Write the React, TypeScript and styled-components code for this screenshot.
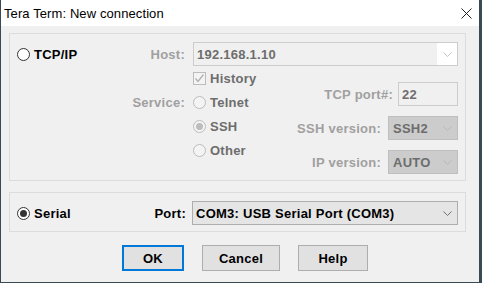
import styled, { createGlobalStyle } from 'styled-components'

const GlobalStyle = createGlobalStyle`
  html, body {
    margin: 0;
    padding: 0;
    background: #ffffff;
  }
  * {
    box-sizing: border-box;
  }
`

const Window = styled.div`
  width: 482px;
  height: 283px;
  display: flex;
  flex-direction: column;
  background: #f0f0f0;
  border-left: 1px solid #3b4a52;
  border-right: 3px solid #3b4a52;
  border-bottom: 1px solid #3b4a52;
  font-family: 'Liberation Sans', Arial, sans-serif;
  font-size: 13px;
  font-weight: bold;
  letter-spacing: 0.25px;
  color: #000;
`

const TitleBar = styled.div`
  height: 26px;
  flex: none;
  display: flex;
  align-items: center;
  justify-content: space-between;
  padding: 0 7px 0 3px;
  background: #ffffff;
`

const TitleText = styled.span`
  font-weight: normal;
  letter-spacing: 0.1px;
  color: #000;
`

const Body = styled.div`
  flex: 1;
  display: flex;
  flex-direction: column;
  padding: 7px 13px 0 8px;
`

const Group = styled.div`
  border: 1px solid #dcdcdc;
  display: grid;
  column-gap: 8px;
`

const TcpGroup = styled(Group)`
  padding: 8px 7px 18px 7px;
  grid-template-columns: 1fr auto 90px 167px;
  grid-template-rows: repeat(5, 24px);
  align-items: center;
`

const SerialGroup = styled(Group)`
  margin-top: 11px;
  padding: 8px 7px 6px 7px;
  grid-template-columns: 1fr auto 266px;
  column-gap: 6px;
  align-items: center;
`

const Option = styled.label`
  display: flex;
  align-items: center;
  gap: 4px;
  white-space: nowrap;
`

const Text = styled.span<{ $tone?: 'dim' | 'muted' }>`
  color: ${p =>
    p.$tone === 'dim' ? '#a0a0a0' : p.$tone === 'muted' ? '#6d6d6d' : '#000'};
  white-space: nowrap;
`

const FieldLabel = styled(Text)`
  justify-self: end;
`

const Radio = styled.span<{ $disabled?: boolean; $checked?: boolean }>`
  width: 13px;
  height: 13px;
  flex: none;
  border-radius: 50%;
  border: 1px solid ${p => (p.$disabled ? '#bcbcbc' : '#333333')};
  background: ${p => (p.$disabled ? '#f4f4f4' : '#ffffff')};
  display: flex;
  align-items: center;
  justify-content: center;

  &::after {
    content: '';
    display: ${p => (p.$checked ? 'block' : 'none')};
    width: 7px;
    height: 7px;
    border-radius: 50%;
    background: ${p => (p.$disabled ? '#bcbcbc' : '#333333')};
  }
`

const CheckBox = styled.span`
  width: 13px;
  height: 13px;
  flex: none;
  border: 1px solid #bcbcbc;
  background: #f4f4f4;
  display: flex;
  align-items: center;
  justify-content: center;
`

const Combo = styled.div<{ $variant: 'edit' | 'grey' | 'normal' }>`
  height: 24px;
  display: flex;
  align-items: center;
  justify-content: space-between;
  padding-left: 3px;
  border: 1px solid
    ${p => (p.$variant === 'normal' ? '#adadad' : p.$variant === 'grey' ? '#bfbfbf' : '#cccccc')};
  background: ${p =>
    p.$variant === 'normal' ? '#e5e5e5' : p.$variant === 'grey' ? '#cccccc' : '#f0f0f0'};
  color: ${p => (p.$variant === 'normal' ? '#000' : '#6d6d6d')};
`

const ArrowBox = styled.span<{ $white?: boolean }>`
  width: 20px;
  align-self: stretch;
  display: flex;
  align-items: center;
  justify-content: center;
  background: ${p => (p.$white ? '#ffffff' : 'transparent')};
`

const HostCombo = styled(Combo)`
  grid-column: 3 / 5;
`

const LeftOptions = styled.div`
  grid-column: 3;
  grid-row: 2 / 6;
  display: grid;
  grid-template-rows: repeat(4, 24px);
  align-items: center;
`

const RightFields = styled.div`
  grid-column: 4;
  grid-row: 2 / 6;
  align-self: start;
  display: flex;
  flex-direction: column;
  gap: 10px;
  padding-top: 16px;
`

const FieldRow = styled.div<{ $gap: number }>`
  display: flex;
  align-items: center;
  justify-content: flex-end;
  gap: ${p => p.$gap}px;
`

const PortInput = styled.div`
  width: 60px;
  height: 24px;
  display: flex;
  align-items: center;
  padding-left: 3px;
  border: 1px solid #cccccc;
  background: #f0f0f0;
  color: #6d6d6d;
`

const SmallSelect = styled(Combo)`
  width: 70px;
  padding-left: 4px;
`

const TcpRadio = styled(Option)`
  grid-column: 1;
  grid-row: 1;
`

const ServiceLabel = styled(FieldLabel)`
  grid-column: 2;
  grid-row: 3;
`

const ButtonRow = styled.div`
  display: flex;
  justify-content: center;
  gap: 18px;
  margin-top: 13px;
  padding-left: 15px;
`

const Button = styled.button<{ $default?: boolean; $w: number }>`
  width: ${p => p.$w}px;
  height: 26px;
  font: inherit;
  letter-spacing: inherit;
  color: #000;
  background: #e1e1e1;
  border: ${p => (p.$default ? '2px solid #0078d7' : '1px solid #adadad')};
  padding: 0;
`

const Chevron = ({ color }: { color: string }) => (
  <svg width="9" height="5" viewBox="0 0 9 5">
    <polyline points="0.5,0.5 4.5,4.5 8.5,0.5" fill="none" stroke={color} strokeWidth="1" />
  </svg>
)

export default function App() {
  return (
    <>
      <GlobalStyle />
      <Window>
        <TitleBar>
          <TitleText>Tera Term: New connection</TitleText>
          <svg width="11" height="11" viewBox="0 0 11 11">
            <path d="M0.5 0.5 L10.5 10.5 M10.5 0.5 L0.5 10.5" stroke="#222" strokeWidth="1" />
          </svg>
        </TitleBar>
        <Body>
          <TcpGroup>
            <TcpRadio>
              <Radio />
              <Text>TCP/IP</Text>
            </TcpRadio>
            <FieldLabel $tone="dim">Host:</FieldLabel>
            <HostCombo $variant="edit">
              <span>192.168.1.10</span>
              <ArrowBox $white>
                <Chevron color="#c4c4c4" />
              </ArrowBox>
            </HostCombo>
            <ServiceLabel $tone="dim">Service:</ServiceLabel>
            <LeftOptions>
              <Option>
                <CheckBox>
                  <svg width="11" height="11" viewBox="0 0 11 11">
                    <polyline points="1.5,5.5 4,8.5 9.5,1.5" fill="none" stroke="#b0b0b0" strokeWidth="1.3" />
                  </svg>
                </CheckBox>
                <Text $tone="muted">History</Text>
              </Option>
              <Option>
                <Radio $disabled />
                <Text $tone="muted">Telnet</Text>
              </Option>
              <Option>
                <Radio $disabled $checked />
                <Text $tone="muted">SSH</Text>
              </Option>
              <Option>
                <Radio $disabled />
                <Text $tone="muted">Other</Text>
              </Option>
            </LeftOptions>
            <RightFields>
              <FieldRow $gap={5}>
                <Text $tone="dim">TCP port#:</Text>
                <PortInput>22</PortInput>
              </FieldRow>
              <FieldRow $gap={7}>
                <Text $tone="dim">SSH version:</Text>
                <SmallSelect $variant="grey">
                  <span>SSH2</span>
                  <ArrowBox>
                    <Chevron color="#b8b8b8" />
                  </ArrowBox>
                </SmallSelect>
              </FieldRow>
              <FieldRow $gap={7}>
                <Text $tone="dim">IP version:</Text>
                <SmallSelect $variant="grey">
                  <span>AUTO</span>
                  <ArrowBox>
                    <Chevron color="#b8b8b8" />
                  </ArrowBox>
                </SmallSelect>
              </FieldRow>
            </RightFields>
          </TcpGroup>
          <SerialGroup>
            <Option>
              <Radio $checked />
              <Text>Serial</Text>
            </Option>
            <FieldLabel>Port:</FieldLabel>
            <Combo $variant="normal">
              <span>COM3: USB Serial Port (COM3)</span>
              <ArrowBox>
                <Chevron color="#707070" />
              </ArrowBox>
            </Combo>
          </SerialGroup>
          <ButtonRow>
            <Button $default $w={62}>OK</Button>
            <Button $w={78}>Cancel</Button>
            <Button $w={70}>Help</Button>
          </ButtonRow>
        </Body>
      </Window>
    </>
  )
}
